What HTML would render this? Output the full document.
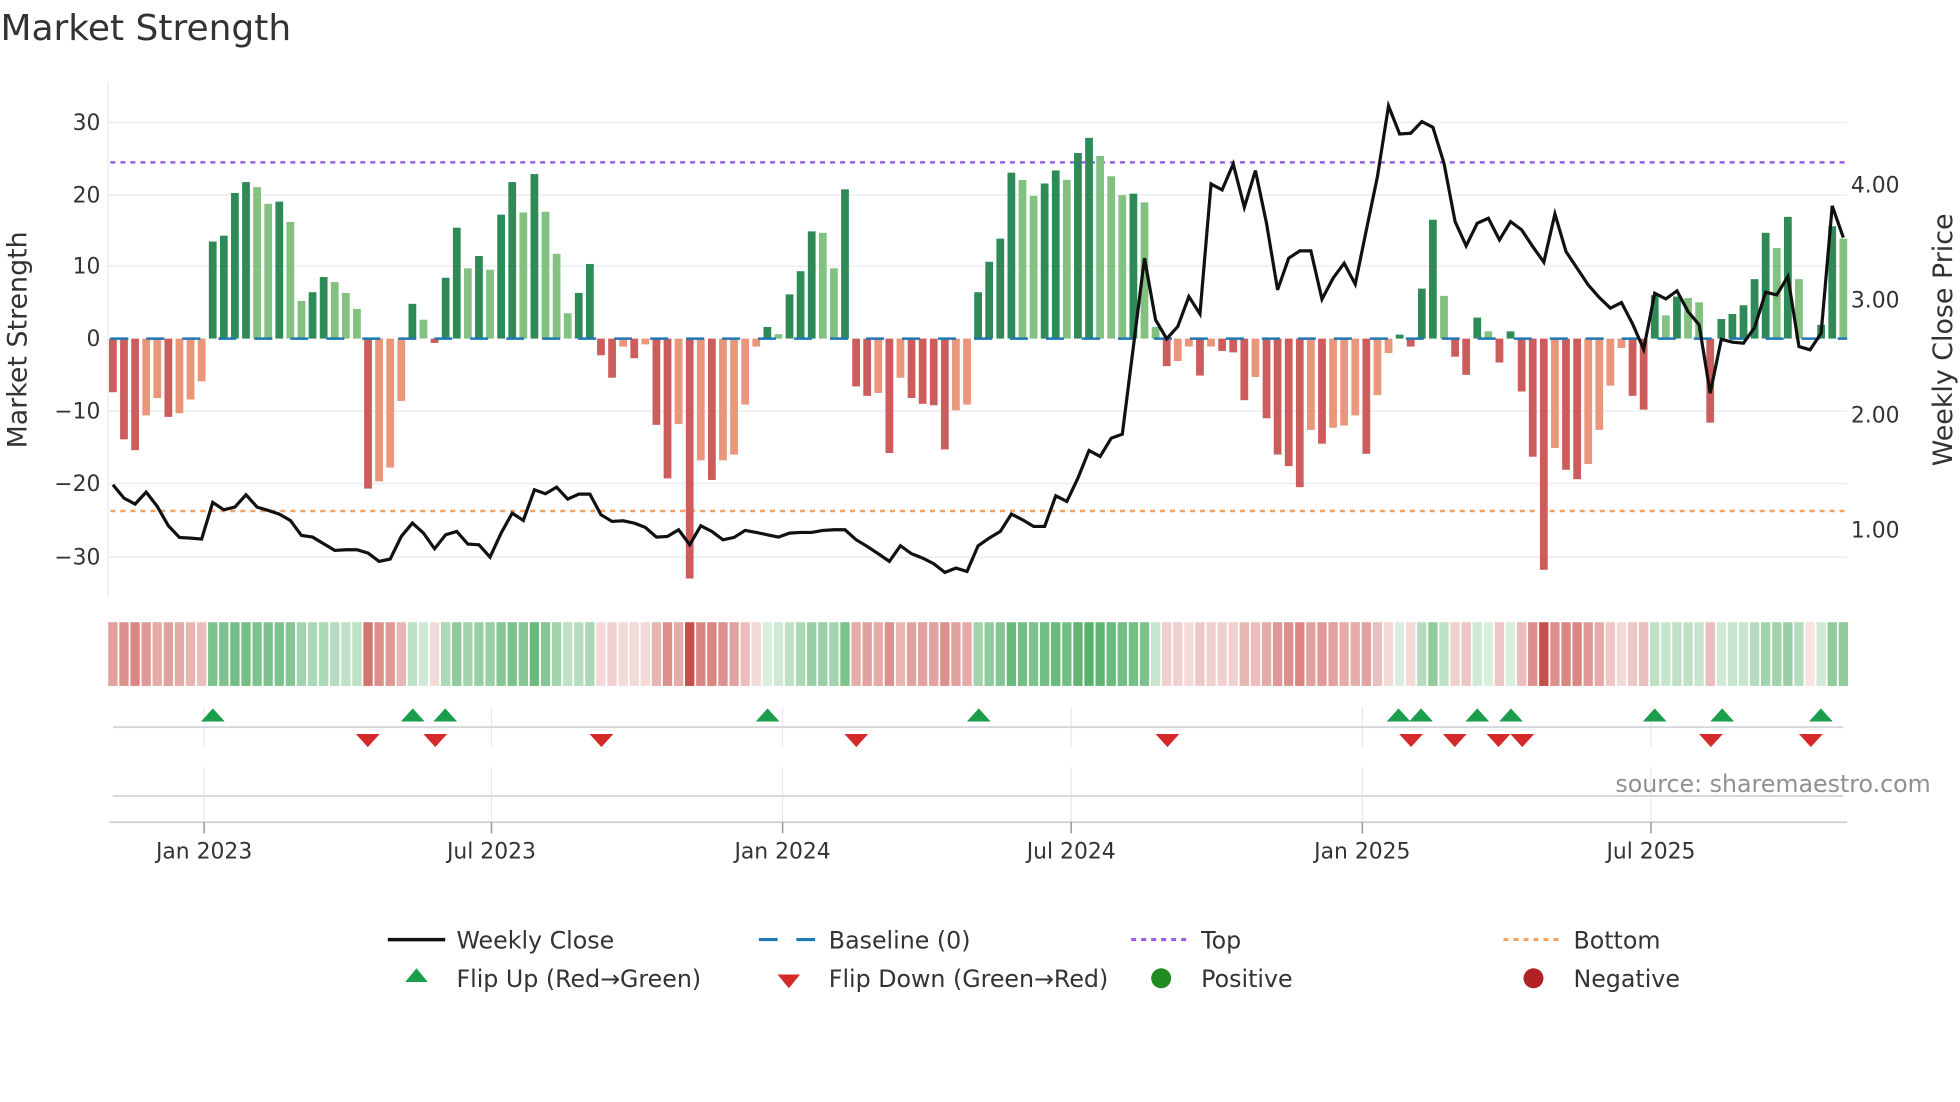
<!DOCTYPE html>
<html><head><meta charset="utf-8"><style>
html,body{margin:0;padding:0;background:#fff;}
svg{display:block;font-family:"DejaVu Sans","Liberation Sans",sans-serif;}
.D{fill:#2e8b57}.L{fill:#82c17f}.R{fill:#cd5c5c}.S{fill:#e9967a}
.g{fill:#45a85c}.r{fill:#c4453f}
.t{fill:#333;font-size:17.5px}
</style></head><body>
<svg width="1960" height="1102" viewBox="0 0 1568 882" xmlns="http://www.w3.org/2000/svg">
<text x="0" y="32" style="font-size:28.8px;fill:#333">Market Strength</text>
<g stroke="#eceef3" stroke-width="1.2">
<line x1="86" y1="65" x2="86" y2="478"/>
<line x1="86" y1="98" x2="1478" y2="98"/><line x1="86" y1="156" x2="1478" y2="156"/><line x1="86" y1="213" x2="1478" y2="213"/><line x1="86" y1="329" x2="1478" y2="329"/><line x1="86" y1="387" x2="1478" y2="387"/><line x1="86" y1="446" x2="1478" y2="446"/>
</g>
<g class="t" text-anchor="end">
<text x="80" y="104">30</text><text x="80" y="162">20</text><text x="80" y="219">10</text><text x="80" y="277">0</text><text x="80" y="335">−10</text><text x="80" y="393">−20</text><text x="80" y="452">−30</text>
</g>
<g class="t">
<text x="1481" y="154">4.00</text><text x="1481" y="246">3.00</text><text x="1481" y="338">2.00</text><text x="1481" y="430">1.00</text>
</g>
<text transform="translate(21,272) rotate(-90)" text-anchor="middle" style="font-size:21.5px;fill:#333">Market Strength</text>
<text transform="translate(1562,272) rotate(-90)" text-anchor="middle" style="font-size:21.5px;fill:#333">Weekly Close Price</text>
<line x1="88" y1="130" x2="1478" y2="130" stroke="#9b5de5" stroke-width="2" stroke-dasharray="4 4"/>
<line x1="88" y1="409" x2="1478" y2="409" stroke="#f4a261" stroke-width="2" stroke-dasharray="4 4"/>
<g transform="translate(90,271) scale(8.878,-5.8)">
<rect class="R" x="-.35" y="-7.4" width=".7" height="7.4"/>
<rect class="R" x=".65" y="-13.9" width=".7" height="13.9"/>
<rect class="R" x="1.65" y="-15.4" width=".7" height="15.4"/>
<rect class="S" x="2.65" y="-10.6" width=".7" height="10.6"/>
<rect class="S" x="3.65" y="-8.2" width=".7" height="8.2"/>
<rect class="R" x="4.65" y="-10.8" width=".7" height="10.8"/>
<rect class="S" x="5.65" y="-10.3" width=".7" height="10.3"/>
<rect class="S" x="6.65" y="-8.4" width=".7" height="8.4"/>
<rect class="S" x="7.65" y="-5.9" width=".7" height="5.9"/>
<rect class="D" x="8.65" y="0" width=".7" height="13.4"/>
<rect class="D" x="9.65" y="0" width=".7" height="14.2"/>
<rect class="D" x="10.65" y="0" width=".7" height="20.1"/>
<rect class="D" x="11.65" y="0" width=".7" height="21.6"/>
<rect class="L" x="12.65" y="0" width=".7" height="20.9"/>
<rect class="L" x="13.65" y="0" width=".7" height="18.6"/>
<rect class="D" x="14.65" y="0" width=".7" height="18.9"/>
<rect class="L" x="15.65" y="0" width=".7" height="16.1"/>
<rect class="L" x="16.65" y="0" width=".7" height="5.2"/>
<rect class="D" x="17.65" y="0" width=".7" height="6.4"/>
<rect class="D" x="18.65" y="0" width=".7" height="8.5"/>
<rect class="L" x="19.65" y="0" width=".7" height="7.8"/>
<rect class="L" x="20.65" y="0" width=".7" height="6.3"/>
<rect class="L" x="21.65" y="0" width=".7" height="4.1"/>
<rect class="R" x="22.65" y="-20.7" width=".7" height="20.7"/>
<rect class="S" x="23.65" y="-19.7" width=".7" height="19.7"/>
<rect class="S" x="24.65" y="-17.8" width=".7" height="17.8"/>
<rect class="S" x="25.65" y="-8.6" width=".7" height="8.6"/>
<rect class="D" x="26.65" y="0" width=".7" height="4.8"/>
<rect class="L" x="27.65" y="0" width=".7" height="2.6"/>
<rect class="R" x="28.65" y="-.6" width=".7" height=".6"/>
<rect class="D" x="29.65" y="0" width=".7" height="8.4"/>
<rect class="D" x="30.65" y="0" width=".7" height="15.3"/>
<rect class="L" x="31.65" y="0" width=".7" height="9.7"/>
<rect class="D" x="32.65" y="0" width=".7" height="11.4"/>
<rect class="L" x="33.65" y="0" width=".7" height="9.5"/>
<rect class="D" x="34.65" y="0" width=".7" height="17.1"/>
<rect class="D" x="35.65" y="0" width=".7" height="21.6"/>
<rect class="L" x="36.65" y="0" width=".7" height="17.4"/>
<rect class="D" x="37.65" y="0" width=".7" height="22.7"/>
<rect class="L" x="38.65" y="0" width=".7" height="17.5"/>
<rect class="L" x="39.65" y="0" width=".7" height="11.7"/>
<rect class="L" x="40.65" y="0" width=".7" height="3.5"/>
<rect class="D" x="41.65" y="0" width=".7" height="6.3"/>
<rect class="D" x="42.65" y="0" width=".7" height="10.3"/>
<rect class="R" x="43.65" y="-2.3" width=".7" height="2.3"/>
<rect class="R" x="44.65" y="-5.4" width=".7" height="5.4"/>
<rect class="S" x="45.65" y="-1.1" width=".7" height="1.1"/>
<rect class="R" x="46.65" y="-2.7" width=".7" height="2.7"/>
<rect class="S" x="47.65" y="-.8" width=".7" height=".8"/>
<rect class="R" x="48.65" y="-11.9" width=".7" height="11.9"/>
<rect class="R" x="49.65" y="-19.3" width=".7" height="19.3"/>
<rect class="S" x="50.65" y="-11.8" width=".7" height="11.8"/>
<rect class="R" x="51.65" y="-33.1" width=".7" height="33.1"/>
<rect class="S" x="52.65" y="-16.8" width=".7" height="16.8"/>
<rect class="R" x="53.65" y="-19.5" width=".7" height="19.5"/>
<rect class="S" x="54.65" y="-16.8" width=".7" height="16.8"/>
<rect class="S" x="55.65" y="-16" width=".7" height="16"/>
<rect class="S" x="56.65" y="-9.1" width=".7" height="9.1"/>
<rect class="S" x="57.65" y="-1.1" width=".7" height="1.1"/>
<rect class="D" x="58.65" y="0" width=".7" height="1.6"/>
<rect class="L" x="59.65" y="0" width=".7" height=".6"/>
<rect class="D" x="60.65" y="0" width=".7" height="6.1"/>
<rect class="D" x="61.65" y="0" width=".7" height="9.3"/>
<rect class="D" x="62.65" y="0" width=".7" height="14.8"/>
<rect class="L" x="63.65" y="0" width=".7" height="14.6"/>
<rect class="L" x="64.65" y="0" width=".7" height="9.7"/>
<rect class="D" x="65.65" y="0" width=".7" height="20.6"/>
<rect class="R" x="66.65" y="-6.6" width=".7" height="6.6"/>
<rect class="R" x="67.65" y="-7.9" width=".7" height="7.9"/>
<rect class="S" x="68.65" y="-7.5" width=".7" height="7.5"/>
<rect class="R" x="69.65" y="-15.8" width=".7" height="15.8"/>
<rect class="S" x="70.65" y="-5.4" width=".7" height="5.4"/>
<rect class="R" x="71.65" y="-8.2" width=".7" height="8.2"/>
<rect class="R" x="72.65" y="-9" width=".7" height="9"/>
<rect class="R" x="73.65" y="-9.2" width=".7" height="9.2"/>
<rect class="R" x="74.65" y="-15.3" width=".7" height="15.3"/>
<rect class="S" x="75.65" y="-9.9" width=".7" height="9.9"/>
<rect class="S" x="76.65" y="-9.1" width=".7" height="9.1"/>
<rect class="D" x="77.65" y="0" width=".7" height="6.4"/>
<rect class="D" x="78.65" y="0" width=".7" height="10.6"/>
<rect class="D" x="79.65" y="0" width=".7" height="13.8"/>
<rect class="D" x="80.65" y="0" width=".7" height="22.9"/>
<rect class="L" x="81.65" y="0" width=".7" height="21.9"/>
<rect class="L" x="82.65" y="0" width=".7" height="19.7"/>
<rect class="D" x="83.65" y="0" width=".7" height="21.4"/>
<rect class="D" x="84.65" y="0" width=".7" height="23.2"/>
<rect class="L" x="85.65" y="0" width=".7" height="21.9"/>
<rect class="D" x="86.65" y="0" width=".7" height="25.6"/>
<rect class="D" x="87.65" y="0" width=".7" height="27.7"/>
<rect class="L" x="88.65" y="0" width=".7" height="25.2"/>
<rect class="L" x="89.65" y="0" width=".7" height="22.4"/>
<rect class="L" x="90.65" y="0" width=".7" height="19.8"/>
<rect class="D" x="91.65" y="0" width=".7" height="20"/>
<rect class="L" x="92.65" y="0" width=".7" height="18.8"/>
<rect class="L" x="93.65" y="0" width=".7" height="1.6"/>
<rect class="R" x="94.65" y="-3.8" width=".7" height="3.8"/>
<rect class="S" x="95.65" y="-3.1" width=".7" height="3.1"/>
<rect class="S" x="96.65" y="-1.1" width=".7" height="1.1"/>
<rect class="R" x="97.65" y="-5.1" width=".7" height="5.1"/>
<rect class="S" x="98.65" y="-1.1" width=".7" height="1.1"/>
<rect class="R" x="99.65" y="-1.7" width=".7" height="1.7"/>
<rect class="R" x="100.65" y="-1.9" width=".7" height="1.9"/>
<rect class="R" x="101.65" y="-8.5" width=".7" height="8.5"/>
<rect class="S" x="102.65" y="-5.3" width=".7" height="5.3"/>
<rect class="R" x="103.65" y="-11" width=".7" height="11"/>
<rect class="R" x="104.65" y="-16" width=".7" height="16"/>
<rect class="R" x="105.65" y="-17.6" width=".7" height="17.6"/>
<rect class="R" x="106.65" y="-20.5" width=".7" height="20.5"/>
<rect class="S" x="107.65" y="-12.6" width=".7" height="12.6"/>
<rect class="R" x="108.65" y="-14.5" width=".7" height="14.5"/>
<rect class="S" x="109.65" y="-12.3" width=".7" height="12.3"/>
<rect class="S" x="110.65" y="-12" width=".7" height="12"/>
<rect class="S" x="111.65" y="-10.6" width=".7" height="10.6"/>
<rect class="R" x="112.65" y="-15.9" width=".7" height="15.9"/>
<rect class="S" x="113.65" y="-7.8" width=".7" height="7.8"/>
<rect class="S" x="114.65" y="-2" width=".7" height="2"/>
<rect class="D" x="115.65" y="0" width=".7" height=".55"/>
<rect class="R" x="116.65" y="-1.1" width=".7" height="1.1"/>
<rect class="D" x="117.65" y="0" width=".7" height="6.9"/>
<rect class="D" x="118.65" y="0" width=".7" height="16.4"/>
<rect class="L" x="119.65" y="0" width=".7" height="5.9"/>
<rect class="R" x="120.65" y="-2.5" width=".7" height="2.5"/>
<rect class="R" x="121.65" y="-5" width=".7" height="5"/>
<rect class="D" x="122.65" y="0" width=".7" height="2.9"/>
<rect class="L" x="123.65" y="0" width=".7" height="1"/>
<rect class="R" x="124.65" y="-3.3" width=".7" height="3.3"/>
<rect class="D" x="125.65" y="0" width=".7" height="1"/>
<rect class="R" x="126.65" y="-7.3" width=".7" height="7.3"/>
<rect class="R" x="127.65" y="-16.3" width=".7" height="16.3"/>
<rect class="R" x="128.65" y="-31.9" width=".7" height="31.9"/>
<rect class="S" x="129.65" y="-15.1" width=".7" height="15.1"/>
<rect class="R" x="130.65" y="-18.1" width=".7" height="18.1"/>
<rect class="R" x="131.65" y="-19.4" width=".7" height="19.4"/>
<rect class="S" x="132.65" y="-17.3" width=".7" height="17.3"/>
<rect class="S" x="133.65" y="-12.6" width=".7" height="12.6"/>
<rect class="S" x="134.65" y="-6.5" width=".7" height="6.5"/>
<rect class="S" x="135.65" y="-1.3" width=".7" height="1.3"/>
<rect class="R" x="136.65" y="-7.9" width=".7" height="7.9"/>
<rect class="R" x="137.65" y="-9.8" width=".7" height="9.8"/>
<rect class="D" x="138.65" y="0" width=".7" height="6"/>
<rect class="L" x="139.65" y="0" width=".7" height="3.2"/>
<rect class="D" x="140.65" y="0" width=".7" height="5.8"/>
<rect class="L" x="141.65" y="0" width=".7" height="5.6"/>
<rect class="L" x="142.65" y="0" width=".7" height="5"/>
<rect class="R" x="143.65" y="-11.6" width=".7" height="11.6"/>
<rect class="D" x="144.65" y="0" width=".7" height="2.7"/>
<rect class="D" x="145.65" y="0" width=".7" height="3.4"/>
<rect class="D" x="146.65" y="0" width=".7" height="4.6"/>
<rect class="D" x="147.65" y="0" width=".7" height="8.2"/>
<rect class="D" x="148.65" y="0" width=".7" height="14.6"/>
<rect class="L" x="149.65" y="0" width=".7" height="12.5"/>
<rect class="D" x="150.65" y="0" width=".7" height="16.8"/>
<rect class="L" x="151.65" y="0" width=".7" height="8.2"/>
<rect class="D" x="153.65" y="0" width=".7" height="1.9"/>
<rect class="D" x="154.65" y="0" width=".7" height="15.5"/>
<rect class="L" x="155.65" y="0" width=".7" height="13.8"/>
</g>
<line x1="88" y1="271" x2="1478" y2="271" stroke="#1f77b4" stroke-width="2" stroke-dasharray="14.4 14.4"/>
<g transform="translate(90,80) scale(8.878,0.26667)">
<polyline fill="none" stroke="#111" stroke-width="3.2" vector-effect="non-scaling-stroke" stroke-linejoin="miter" points="0,1155 1,1195 2,1213 3,1177 4,1220 5,1278 6,1313 7,1315 8,1318 9,1208 10,1230 11,1222 12,1185 13,1222 14,1232 15,1243 16,1262 17,1307 18,1312 19,1332 20,1352 21,1350 22,1350 23,1360 24,1385 25,1378 26,1310 27,1270 28,1300 29,1347 30,1305 31,1295 32,1333 33,1335 34,1372 35,1300 36,1240 37,1262 38,1170 39,1182 40,1162 41,1198 42,1183 43,1183 44,1245 45,1265 46,1263 47,1270 48,1283 49,1312 50,1310 51,1290 52,1335 53,1278 54,1295 55,1320 56,1313 57,1292 58,1298 59,1305 60,1312 61,1300 62,1298 63,1298 64,1292 65,1290 66,1290 67,1320 68,1340 69,1362 70,1385 71,1338 72,1362 73,1375 74,1392 75,1418 76,1405 77,1415 78,1338 79,1315 80,1295 81,1243 82,1260 83,1280 84,1280 85,1188 86,1205 87,1135 88,1052 89,1070 90,1015 91,1003 92,740 93,475 94,660 95,717 96,680 97,590 98,642 99,252 100,270 101,192 102,322 103,212 104,370 105,570 106,475 107,453 108,453 109,598 110,535 111,490 112,553 113,390 114,230 115,18 116,102 117,100 118,65 119,82 120,190 121,365 122,438 123,370 124,355 125,420 126,365 127,390 128,440 129,487 130,342 131,455 132,505 133,555 134,593 135,625 136,608 137,672 138,748 139,580 140,597 141,573 142,635 143,675 144,880 145,718 146,727 147,730 148,683 149,577 150,585 151,530 152,740 153,750 154,700 155,318 156,413"/>
</g>
<g transform="translate(90,498)">
<g transform="scale(8.878,1)">
<rect class="r" x="-.42" width=".84" height="51" fill-opacity=".5"/><rect class="r" x=".58" width=".84" height="51" fill-opacity=".6"/><rect class="r" x="1.58" width=".84" height="51" fill-opacity=".65"/><rect class="r" x="2.58" width=".84" height="51" fill-opacity=".55"/><rect class="r" x="3.58" width=".84" height="51" fill-opacity=".45"/><rect class="r" x="4.58" width=".84" height="51" fill-opacity=".5"/><rect class="r" x="5.58" width=".84" height="51" fill-opacity=".45"/><rect class="r" x="6.58" width=".84" height="51" fill-opacity=".4"/><rect class="r" x="7.58" width=".84" height="51" fill-opacity=".35"/>
<rect class="g" x="8.58" width=".84" height="51" fill-opacity=".7"/><rect class="g" x="9.58" width=".84" height="51" fill-opacity=".7"/><rect class="g" x="10.58" width=".84" height="51" fill-opacity=".75"/><rect class="g" x="11.58" width=".84" height="51" fill-opacity=".75"/><rect class="g" x="12.58" width=".84" height="51" fill-opacity=".7"/><rect class="g" x="13.58" width=".84" height="51" fill-opacity=".7"/><rect class="g" x="14.58" width=".84" height="51" fill-opacity=".7"/><rect class="g" x="15.58" width=".84" height="51" fill-opacity=".65"/><rect class="g" x="16.58" width=".84" height="51" fill-opacity=".5"/><rect class="g" x="17.58" width=".84" height="51" fill-opacity=".45"/><rect class="g" x="18.58" width=".84" height="51" fill-opacity=".45"/><rect class="g" x="19.58" width=".84" height="51" fill-opacity=".4"/><rect class="g" x="20.58" width=".84" height="51" fill-opacity=".35"/><rect class="g" x="21.58" width=".84" height="51" fill-opacity=".35"/>
<rect class="r" x="22.58" width=".84" height="51" fill-opacity=".75"/><rect class="r" x="23.58" width=".84" height="51" fill-opacity=".6"/><rect class="r" x="24.58" width=".84" height="51" fill-opacity=".55"/><rect class="r" x="25.58" width=".84" height="51" fill-opacity=".4"/>
<rect class="g" x="26.58" width=".84" height="51" fill-opacity=".35"/><rect class="g" x="27.58" width=".84" height="51" fill-opacity=".25"/><rect class="r" x="28.58" width=".84" height="51" fill-opacity=".2"/>
<rect class="g" x="29.58" width=".84" height="51" fill-opacity=".45"/><rect class="g" x="30.58" width=".84" height="51" fill-opacity=".6"/><rect class="g" x="31.58" width=".84" height="51" fill-opacity=".5"/><rect class="g" x="32.58" width=".84" height="51" fill-opacity=".55"/><rect class="g" x="33.58" width=".84" height="51" fill-opacity=".55"/><rect class="g" x="34.58" width=".84" height="51" fill-opacity=".65"/><rect class="g" x="35.58" width=".84" height="51" fill-opacity=".7"/><rect class="g" x="36.58" width=".84" height="51" fill-opacity=".65"/><rect class="g" x="37.58" width=".84" height="51" fill-opacity=".8"/><rect class="g" x="38.58" width=".84" height="51" fill-opacity=".65"/><rect class="g" x="39.58" width=".84" height="51" fill-opacity=".5"/><rect class="g" x="40.58" width=".84" height="51" fill-opacity=".35"/><rect class="g" x="41.58" width=".84" height="51" fill-opacity=".4"/><rect class="g" x="42.58" width=".84" height="51" fill-opacity=".45"/>
<rect class="r" x="43.58" width=".84" height="51" fill-opacity=".2"/><rect class="r" x="44.58" width=".84" height="51" fill-opacity=".25"/><rect class="r" x="45.58" width=".84" height="51" fill-opacity=".2"/><rect class="r" x="46.58" width=".84" height="51" fill-opacity=".2"/><rect class="r" x="47.58" width=".84" height="51" fill-opacity=".2"/><rect class="r" x="48.58" width=".84" height="51" fill-opacity=".4"/><rect class="r" x="49.58" width=".84" height="51" fill-opacity=".6"/><rect class="r" x="50.58" width=".84" height="51" fill-opacity=".45"/><rect class="r" x="51.58" width=".84" height="51" fill-opacity=".95"/><rect class="r" x="52.58" width=".84" height="51" fill-opacity=".65"/><rect class="r" x="53.58" width=".84" height="51" fill-opacity=".65"/><rect class="r" x="54.58" width=".84" height="51" fill-opacity=".6"/><rect class="r" x="55.58" width=".84" height="51" fill-opacity=".5"/><rect class="r" x="56.58" width=".84" height="51" fill-opacity=".35"/><rect class="r" x="57.58" width=".84" height="51" fill-opacity=".2"/>
<rect class="g" x="58.58" width=".84" height="51" fill-opacity=".2"/><rect class="g" x="59.58" width=".84" height="51" fill-opacity=".25"/><rect class="g" x="60.58" width=".84" height="51" fill-opacity=".35"/><rect class="g" x="61.58" width=".84" height="51" fill-opacity=".45"/><rect class="g" x="62.58" width=".84" height="51" fill-opacity=".55"/><rect class="g" x="63.58" width=".84" height="51" fill-opacity=".55"/><rect class="g" x="64.58" width=".84" height="51" fill-opacity=".5"/><rect class="g" x="65.58" width=".84" height="51" fill-opacity=".7"/>
<rect class="r" x="66.58" width=".84" height="51" fill-opacity=".45"/><rect class="r" x="67.58" width=".84" height="51" fill-opacity=".5"/><rect class="r" x="68.58" width=".84" height="51" fill-opacity=".45"/><rect class="r" x="69.58" width=".84" height="51" fill-opacity=".6"/><rect class="r" x="70.58" width=".84" height="51" fill-opacity=".4"/><rect class="r" x="71.58" width=".84" height="51" fill-opacity=".5"/><rect class="r" x="72.58" width=".84" height="51" fill-opacity=".5"/><rect class="r" x="73.58" width=".84" height="51" fill-opacity=".5"/><rect class="r" x="74.58" width=".84" height="51" fill-opacity=".6"/><rect class="r" x="75.58" width=".84" height="51" fill-opacity=".5"/><rect class="r" x="76.58" width=".84" height="51" fill-opacity=".45"/>
<rect class="g" x="77.58" width=".84" height="51" fill-opacity=".5"/><rect class="g" x="78.58" width=".84" height="51" fill-opacity=".6"/><rect class="g" x="79.58" width=".84" height="51" fill-opacity=".65"/><rect class="g" x="80.58" width=".84" height="51" fill-opacity=".8"/><rect class="g" x="81.58" width=".84" height="51" fill-opacity=".75"/><rect class="g" x="82.58" width=".84" height="51" fill-opacity=".7"/><rect class="g" x="83.58" width=".84" height="51" fill-opacity=".75"/><rect class="g" x="84.58" width=".84" height="51" fill-opacity=".8"/><rect class="g" x="85.58" width=".84" height="51" fill-opacity=".75"/><rect class="g" x="86.58" width=".84" height="51" fill-opacity=".85"/><rect class="g" x="87.58" width=".84" height="51" fill-opacity=".9"/><rect class="g" x="88.58" width=".84" height="51" fill-opacity=".85"/><rect class="g" x="89.58" width=".84" height="51" fill-opacity=".8"/><rect class="g" x="90.58" width=".84" height="51" fill-opacity=".75"/><rect class="g" x="91.58" width=".84" height="51" fill-opacity=".75"/><rect class="g" x="92.58" width=".84" height="51" fill-opacity=".7"/><rect class="g" x="93.58" width=".84" height="51" fill-opacity=".3"/>
<rect class="r" x="94.58" width=".84" height="51" fill-opacity=".25"/><rect class="r" x="95.58" width=".84" height="51" fill-opacity=".25"/><rect class="r" x="96.58" width=".84" height="51" fill-opacity=".2"/><rect class="r" x="97.58" width=".84" height="51" fill-opacity=".3"/><rect class="r" x="98.58" width=".84" height="51" fill-opacity=".25"/><rect class="r" x="99.58" width=".84" height="51" fill-opacity=".25"/><rect class="r" x="100.58" width=".84" height="51" fill-opacity=".25"/><rect class="r" x="101.58" width=".84" height="51" fill-opacity=".4"/><rect class="r" x="102.58" width=".84" height="51" fill-opacity=".35"/><rect class="r" x="103.58" width=".84" height="51" fill-opacity=".45"/><rect class="r" x="104.58" width=".84" height="51" fill-opacity=".55"/><rect class="r" x="105.58" width=".84" height="51" fill-opacity=".6"/><rect class="r" x="106.58" width=".84" height="51" fill-opacity=".65"/><rect class="r" x="107.58" width=".84" height="51" fill-opacity=".5"/><rect class="r" x="108.58" width=".84" height="51" fill-opacity=".55"/><rect class="r" x="109.58" width=".84" height="51" fill-opacity=".5"/><rect class="r" x="110.58" width=".84" height="51" fill-opacity=".45"/><rect class="r" x="111.58" width=".84" height="51" fill-opacity=".45"/><rect class="r" x="112.58" width=".84" height="51" fill-opacity=".5"/><rect class="r" x="113.58" width=".84" height="51" fill-opacity=".35"/><rect class="r" x="114.58" width=".84" height="51" fill-opacity=".2"/>
<rect class="g" x="115.58" width=".84" height="51" fill-opacity=".2"/><rect class="r" x="116.58" width=".84" height="51" fill-opacity=".2"/><rect class="g" x="117.58" width=".84" height="51" fill-opacity=".4"/><rect class="g" x="118.58" width=".84" height="51" fill-opacity=".6"/><rect class="g" x="119.58" width=".84" height="51" fill-opacity=".35"/><rect class="r" x="120.58" width=".84" height="51" fill-opacity=".25"/><rect class="r" x="121.58" width=".84" height="51" fill-opacity=".3"/><rect class="g" x="122.58" width=".84" height="51" fill-opacity=".25"/><rect class="g" x="123.58" width=".84" height="51" fill-opacity=".2"/><rect class="r" x="124.58" width=".84" height="51" fill-opacity=".3"/><rect class="g" x="125.58" width=".84" height="51" fill-opacity=".2"/>
<rect class="r" x="126.58" width=".84" height="51" fill-opacity=".35"/><rect class="r" x="127.58" width=".84" height="51" fill-opacity=".6"/><rect class="r" x="128.58" width=".84" height="51" fill-opacity=".95"/><rect class="r" x="129.58" width=".84" height="51" fill-opacity=".6"/><rect class="r" x="130.58" width=".84" height="51" fill-opacity=".65"/><rect class="r" x="131.58" width=".84" height="51" fill-opacity=".65"/><rect class="r" x="132.58" width=".84" height="51" fill-opacity=".55"/><rect class="r" x="133.58" width=".84" height="51" fill-opacity=".45"/><rect class="r" x="134.58" width=".84" height="51" fill-opacity=".3"/><rect class="r" x="135.58" width=".84" height="51" fill-opacity=".2"/><rect class="r" x="136.58" width=".84" height="51" fill-opacity=".3"/><rect class="r" x="137.58" width=".84" height="51" fill-opacity=".35"/>
<rect class="g" x="138.58" width=".84" height="51" fill-opacity=".35"/><rect class="g" x="139.58" width=".84" height="51" fill-opacity=".3"/><rect class="g" x="140.58" width=".84" height="51" fill-opacity=".35"/><rect class="g" x="141.58" width=".84" height="51" fill-opacity=".35"/><rect class="g" x="142.58" width=".84" height="51" fill-opacity=".3"/><rect class="r" x="143.58" width=".84" height="51" fill-opacity=".35"/><rect class="g" x="144.58" width=".84" height="51" fill-opacity=".25"/><rect class="g" x="145.58" width=".84" height="51" fill-opacity=".3"/><rect class="g" x="146.58" width=".84" height="51" fill-opacity=".3"/><rect class="g" x="147.58" width=".84" height="51" fill-opacity=".4"/><rect class="g" x="148.58" width=".84" height="51" fill-opacity=".5"/><rect class="g" x="149.58" width=".84" height="51" fill-opacity=".5"/><rect class="g" x="150.58" width=".84" height="51" fill-opacity=".55"/><rect class="g" x="151.58" width=".84" height="51" fill-opacity=".4"/><rect class="r" x="152.58" width=".84" height="51" fill-opacity=".15"/><rect class="g" x="153.58" width=".84" height="51" fill-opacity=".25"/><rect class="g" x="154.58" width=".84" height="51" fill-opacity=".6"/><rect class="g" x="155.58" width=".84" height="51" fill-opacity=".6"/>
</g></g>
<g stroke="#e6e9f0" stroke-width="1">
<line x1="163" y1="566" x2="163" y2="598"/><line x1="393" y1="566" x2="393" y2="598"/><line x1="626" y1="566" x2="626" y2="598"/><line x1="857" y1="566" x2="857" y2="598"/><line x1="1090" y1="566" x2="1090" y2="598"/><line x1="1321" y1="566" x2="1321" y2="598"/>
<line x1="163" y1="614" x2="163" y2="658"/><line x1="393" y1="614" x2="393" y2="658"/><line x1="626" y1="614" x2="626" y2="658"/><line x1="857" y1="614" x2="857" y2="658"/><line x1="1090" y1="614" x2="1090" y2="658"/><line x1="1321" y1="614" x2="1321" y2="658"/>
</g>
<line x1="90" y1="582" x2="1475" y2="582" stroke="#d4d6db" stroke-width="1.5"/>
<line x1="90" y1="637" x2="1475" y2="637" stroke="#d4d6db" stroke-width="1.5"/>
<line x1="87" y1="658" x2="1478" y2="658" stroke="#cfd1d6" stroke-width="1.5"/>
<g stroke="#999" stroke-width="1.2">
<line x1="163" y1="658" x2="163" y2="667"/><line x1="393" y1="658" x2="393" y2="667"/><line x1="626" y1="658" x2="626" y2="667"/><line x1="857" y1="658" x2="857" y2="667"/><line x1="1090" y1="658" x2="1090" y2="667"/><line x1="1321" y1="658" x2="1321" y2="667"/>
</g>
<g fill="#1a9e4b">
<path d="M170 567 l9.5 10.5 h-19z"/><path d="M330 567 l9.5 10.5 h-19z"/><path d="M356 567 l9.5 10.5 h-19z"/><path d="M614 567 l9.5 10.5 h-19z"/><path d="M783 567 l9.5 10.5 h-19z"/><path d="M1119 567 l9.5 10.5 h-19z"/><path d="M1137 567 l9.5 10.5 h-19z"/><path d="M1182 567 l9.5 10.5 h-19z"/><path d="M1209 567 l9.5 10.5 h-19z"/><path d="M1324 567 l9.5 10.5 h-19z"/><path d="M1378 567 l9.5 10.5 h-19z"/><path d="M1457 567 l9.5 10.5 h-19z"/>
</g>
<g fill="#d62a2a">
<path d="M294 598 l9.5 -10.5 h-19z"/><path d="M348 598 l9.5 -10.5 h-19z"/><path d="M481 598 l9.5 -10.5 h-19z"/><path d="M685 598 l9.5 -10.5 h-19z"/><path d="M934 598 l9.5 -10.5 h-19z"/><path d="M1129 598 l9.5 -10.5 h-19z"/><path d="M1164 598 l9.5 -10.5 h-19z"/><path d="M1199 598 l9.5 -10.5 h-19z"/><path d="M1218 598 l9.5 -10.5 h-19z"/><path d="M1369 598 l9.5 -10.5 h-19z"/><path d="M1449 598 l9.5 -10.5 h-19z"/>
</g>
<text x="1545" y="634" text-anchor="end" style="font-size:19px;fill:#909090">source: sharemaestro.com</text>
<g class="t" text-anchor="middle">
<text x="163" y="687">Jan 2023</text><text x="393" y="687">Jul 2023</text><text x="626" y="687">Jan 2024</text><text x="857" y="687">Jul 2024</text><text x="1090" y="687">Jan 2025</text><text x="1321" y="687">Jul 2025</text>
</g>
<g style="font-size:19px;fill:#333">
<line x1="310" y1="752" x2="356" y2="752" stroke="#111" stroke-width="2.8"/>
<text x="365" y="759">Weekly Close</text>
<line x1="607" y1="752" x2="653" y2="752" stroke="#1f77b4" stroke-width="2.5" stroke-dasharray="15 15"/>
<text x="663" y="759">Baseline (0)</text>
<line x1="905" y1="752" x2="951" y2="752" stroke="#9b5de5" stroke-width="2.5" stroke-dasharray="4 4"/>
<text x="961" y="759">Top</text>
<line x1="1203" y1="752" x2="1249" y2="752" stroke="#f4a261" stroke-width="2.5" stroke-dasharray="4 4"/>
<text x="1259" y="759">Bottom</text>
<path d="M333 775 l9 11 h-18z" fill="#1a9e4b"/>
<text x="365" y="790">Flip Up (Red→Green)</text>
<path d="M631 791 l9 -11 h-18z" fill="#d62a2a"/>
<text x="663" y="790">Flip Down (Green→Red)</text>
<circle cx="929" cy="783" r="8" fill="#228b22"/>
<text x="961" y="790">Positive</text>
<circle cx="1227" cy="783" r="8" fill="#b22222"/>
<text x="1259" y="790">Negative</text>
</g>
</svg>
</body></html>
